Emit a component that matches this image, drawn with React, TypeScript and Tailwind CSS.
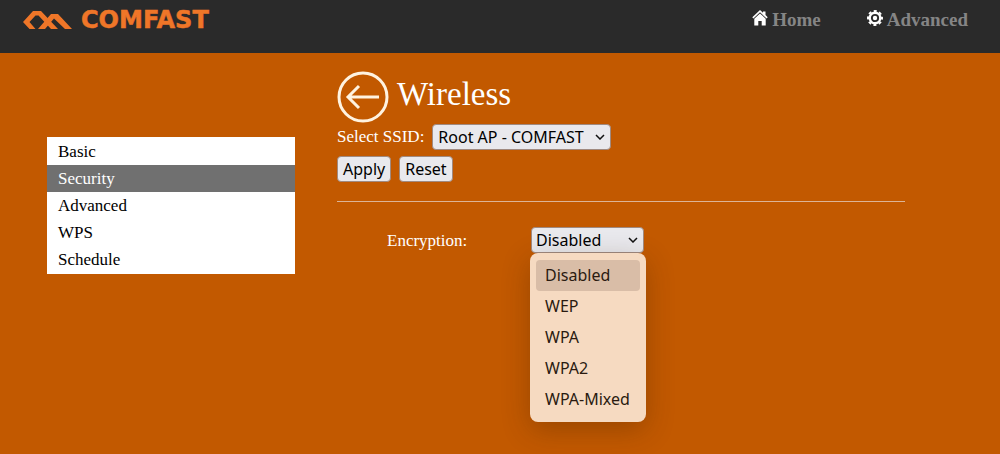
import { useState } from "react";

const menuItems = ["Basic", "Security", "Advanced", "WPS", "Schedule"];
const encryptionModes = ["Disabled", "WEP", "WPA", "WPA2", "WPA-Mixed"];

const controlClass =
  "h-[26px] rounded-[4px] border border-[#a08a80] bg-[#e9e9ed] text-base leading-5 text-black font-['Noto_Sans','Open_Sans',sans-serif]";

function Logo() {
  return (
    <a href="#home" aria-label="COMFAST" className="flex items-center gap-2 text-[#ef7628]">
      <svg viewBox="0 0 50 18" className="h-[18px] w-[50px]" fill="currentColor">
        <path d="M0 11 L10 0 H18 L35 18 H28 L15.5 4.5 H12.5 L6.5 11 L12.5 18 H6.5 Z" />
        <path d="M15 18 L28 3 H35 L49 18 H42 L31 7.500 L22 18 Z" />
      </svg>
      <span className="font-['DejaVu_Sans',sans-serif] text-2xl leading-5 font-bold [-webkit-text-stroke:0.5px_#ef7628]">
        COMFAST
      </span>
    </a>
  );
}

function HomeIcon() {
  return (
    <svg viewBox="0 0 16 16" className="size-4" fill="#fff">
      <path d="M8 0 L0.3 7.2 L1.4 8.4 L8 2.3 L14.6 8.4 L15.7 7.2 L13.5 5.1 V1.5 H11 V2.8 Z" />
      <path d="M8 3.4 L2.3 8.7 V15.5 H6.3 V11 H9.7 V15.5 H13.7 V8.7 Z" />
    </svg>
  );
}

function GearIcon() {
  return (
    <svg viewBox="0 0 16 16" className="size-4" fill="none" stroke="#fff">
      <circle cx="8" cy="8" r="5.3" strokeWidth="2.4" />
      <circle cx="8" cy="8" r="7" strokeWidth="2" strokeDasharray="3 2.498" strokeDashoffset="1.5" />
      <circle cx="8" cy="8" r="2.2" fill="#fff" stroke="none" />
    </svg>
  );
}

function Chevron() {
  return (
    <svg
      viewBox="0 0 10 6"
      className="pointer-events-none absolute top-[10px] right-[6px] h-[6px] w-[10px]"
      fill="none"
      stroke="#111"
      strokeWidth="1.5"
    >
      <path d="M1 1 L5 5 L9 1" />
    </svg>
  );
}

export default function App() {
  const [section, setSection] = useState("Security");
  const [encryption, setEncryption] = useState("Disabled");
  const [open, setOpen] = useState(true);

  return (
    <div className="min-h-screen bg-[#c25900] font-['Liberation_Serif',serif] text-base text-white">
      <header className="flex h-[53px] items-start justify-between bg-[#2a2a2a] pt-[10px] pr-8 pl-[23px]">
        <Logo />
        <nav className="flex gap-[46px] text-[19px] leading-5 font-bold text-[#858585]">
          <a href="#home" className="flex items-start gap-1">
            <HomeIcon />
            Home
          </a>
          <a href="#advanced" className="flex items-start gap-1">
            <GearIcon />
            Advanced
          </a>
        </nav>
      </header>

      <div className="flex">
        <nav className="mt-[84px] ml-[47px] w-[248px] shrink-0 self-start bg-white py-px text-black">
          <ul>
            {menuItems.map((item) => (
              <li key={item}>
                <a
                  href={`#${item.toLowerCase()}`}
                  onClick={() => setSection(item)}
                  className={`block px-[11px] text-[17px] leading-[27px] ${
                    item === section ? "bg-[#707070] text-white" : ""
                  }`}
                >
                  {item}
                </a>
              </li>
            ))}
          </ul>
        </nav>

        <main className="mr-[95px] ml-[42px] flex-1 pt-[18px]">
          <div className="flex items-start gap-2">
            <a href="#back" aria-label="Back">
              <svg viewBox="0 0 52 52" className="size-[52px]" fill="none" stroke="#fff3e0" strokeWidth="3">
                <circle cx="26" cy="26" r="24" />
                <path d="M42 26 H12 M22 15 L11 26 L22 37" />
              </svg>
            </a>
            <h1 className="text-[33px] leading-[46px]">Wireless</h1>
          </div>

          <div className="mt-px flex items-center gap-2">
            <label htmlFor="ssid" className="text-[17px] leading-6">
              Select SSID:
            </label>
            <div className="relative">
              <select id="ssid" className={`${controlClass} w-[179px] appearance-none pl-[5px]`}>
                <option>Root AP - COMFAST</option>
              </select>
              <Chevron />
            </div>
          </div>

          <div className="mt-[6px] flex gap-2">
            <button type="button" className={`${controlClass} px-[5px]`}>
              Apply
            </button>
            <button type="button" className={`${controlClass} px-[5px]`}>
              Reset
            </button>
          </div>

          <hr className="mt-[19px] border-[#dcb497]" />

          <div className="mt-[25px] flex items-center pl-[50px]">
            <label htmlFor="encryption" className="w-[144px] pt-[2px] text-[17px] leading-6">
              Encryption:
            </label>
            <div className="relative">
              <select
                id="encryption"
                value={encryption}
                onChange={(e) => setEncryption(e.target.value)}
                onMouseDown={(e) => {
                  e.preventDefault();
                  setOpen(!open);
                }}
                className={`${controlClass} w-[113px] appearance-none pl-1`}
              >
                {encryptionModes.map((mode) => (
                  <option key={mode}>{mode}</option>
                ))}
              </select>
              <Chevron />

              {open && (
                <ul
                  role="listbox"
                  aria-label="Encryption"
                  className="absolute top-full -left-px w-[116px] rounded-lg bg-[#f6dac1] px-[6px] py-[7px] font-['Noto_Sans','Open_Sans',sans-serif] text-[#2a1a10] shadow-[0_8px_28px_rgba(60,30,0,0.3)]"
                >
                  {encryptionModes.map((mode) => (
                    <li
                      key={mode}
                      role="option"
                      aria-selected={mode === encryption}
                      onClick={() => {
                        setEncryption(mode);
                        setOpen(false);
                      }}
                      className={`rounded-[4px] px-[9px] leading-[31px] ${mode === encryption ? "bg-[#d9bda7]" : ""}`}
                    >
                      {mode}
                    </li>
                  ))}
                </ul>
              )}
            </div>
          </div>
        </main>
      </div>
    </div>
  );
}
